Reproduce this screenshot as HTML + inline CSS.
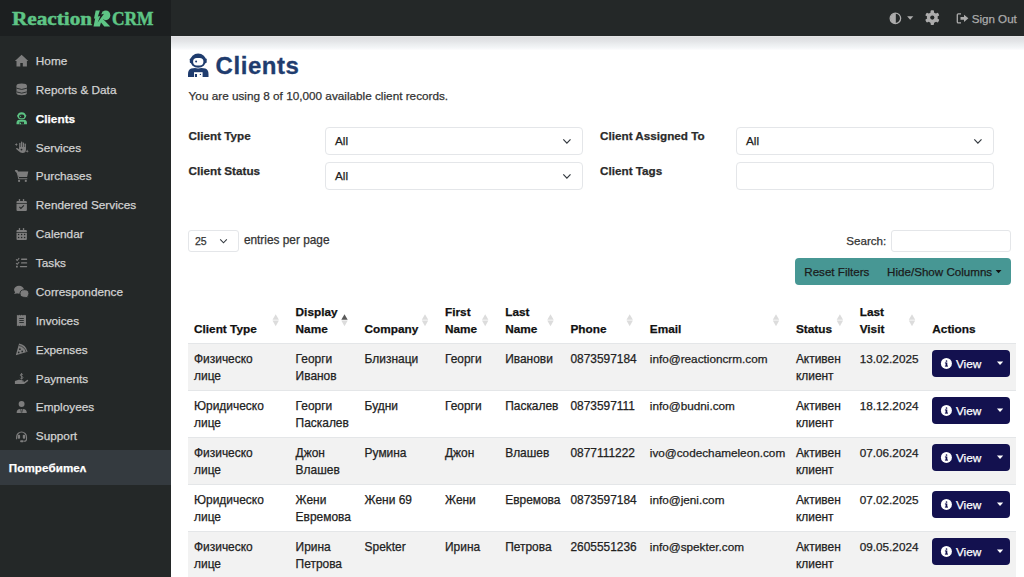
<!DOCTYPE html><html><head><meta charset="utf-8"><style>
*{margin:0;padding:0;box-sizing:border-box}
html,body{width:1024px;height:577px;overflow:hidden;background:#fff;font-family:"Liberation Sans",sans-serif;color:#212529}
.t{position:absolute;white-space:nowrap;-webkit-text-stroke:0.25px currentColor}
.b{position:absolute}
svg{position:absolute;left:0;top:0}
</style></head><body>

<div class="b" style="left:0;top:0;width:171px;height:577px;background:#242828"></div>
<div class="b" style="left:0;top:0;width:171px;height:36px;background:#1c1f20"></div>
<div class="b" style="left:171px;top:0;width:853px;height:36px;background:#242828"></div>
<div class="b" style="left:171px;top:36px;width:853px;height:14px;background:linear-gradient(#e6e7e9 0,#dedfe1 1.5px,#e3e4e7 5px,#eceef0 8.5px,#f4f6f8 12px,#fdfdfe 14px)"></div>
<div class="b" style="left:0;top:450px;width:171px;height:35px;background:#343a3f"></div>
<div class="t" style="left:11.5px;top:7px;font-family:'Liberation Serif',serif;font-weight:bold;font-size:19px;line-height:24px;color:#5ec585;-webkit-text-stroke:0.5px #5ec585;transform:scaleX(1.115);transform-origin:0 0">Reaction</div>
<div class="t" style="left:111.8px;top:7px;font-family:'Liberation Serif',serif;font-weight:bold;font-size:19px;line-height:24px;color:#5ec585;-webkit-text-stroke:0.5px #5ec585;transform:scaleX(0.915);transform-origin:0 0">CRM</div>
<div class="t" style="left:35.80px;top:53.99px;font-size:11.80px;line-height:14.75px;color:#d2d2d2">Home</div>
<div class="t" style="left:35.80px;top:82.86px;font-size:11.80px;line-height:14.75px;color:#d2d2d2">Reports &amp; Data</div>
<div class="t" style="left:35.80px;top:111.74px;font-size:11.80px;line-height:14.75px;color:#fff;font-weight:bold">Clients</div>
<div class="t" style="left:35.80px;top:140.61px;font-size:11.80px;line-height:14.75px;color:#d2d2d2">Services</div>
<div class="t" style="left:35.80px;top:169.49px;font-size:11.80px;line-height:14.75px;color:#d2d2d2">Purchases</div>
<div class="t" style="left:35.80px;top:198.36px;font-size:11.80px;line-height:14.75px;color:#d2d2d2">Rendered Services</div>
<div class="t" style="left:35.80px;top:227.24px;font-size:11.80px;line-height:14.75px;color:#d2d2d2">Calendar</div>
<div class="t" style="left:35.80px;top:256.11px;font-size:11.80px;line-height:14.75px;color:#d2d2d2">Tasks</div>
<div class="t" style="left:35.80px;top:284.99px;font-size:11.80px;line-height:14.75px;color:#d2d2d2">Correspondence</div>
<div class="t" style="left:35.80px;top:313.86px;font-size:11.80px;line-height:14.75px;color:#d2d2d2">Invoices</div>
<div class="t" style="left:35.80px;top:342.74px;font-size:11.80px;line-height:14.75px;color:#d2d2d2">Expenses</div>
<div class="t" style="left:35.80px;top:371.61px;font-size:11.80px;line-height:14.75px;color:#d2d2d2">Payments</div>
<div class="t" style="left:35.80px;top:400.49px;font-size:11.80px;line-height:14.75px;color:#d2d2d2">Employees</div>
<div class="t" style="left:35.80px;top:429.36px;font-size:11.80px;line-height:14.75px;color:#d2d2d2">Support</div>
<div class="t" style="left:8.80px;top:461.23px;font-size:11.60px;line-height:14.50px;color:#fff;font-weight:bold;letter-spacing:0.1px">Поmребиmеʌ</div>
<div class="t" style="left:971.70px;top:11.83px;font-size:11.60px;line-height:14.50px;color:#ababab">Sign Out</div>
<div class="t" style="left:215.60px;top:50.88px;font-size:24.00px;line-height:30.00px;color:#1f3c6e;font-weight:bold;letter-spacing:0.55px;-webkit-text-stroke:0.3px #1f3c6e">Clients</div>
<div class="t" style="left:188.60px;top:88.88px;font-size:11.75px;line-height:14.69px;color:#333">You are using 8 of 10,000 available client records.</div>
<div class="t" style="left:188.60px;top:129.24px;font-size:11.70px;line-height:14.62px;font-weight:bold;color:#2b2b2b">Client Type</div>
<div class="t" style="left:188.60px;top:164.14px;font-size:11.70px;line-height:14.62px;font-weight:bold;color:#2b2b2b">Client Status</div>
<div class="t" style="left:600.10px;top:129.24px;font-size:11.70px;line-height:14.62px;font-weight:bold;color:#2b2b2b">Client Assigned To</div>
<div class="t" style="left:600.10px;top:164.14px;font-size:11.70px;line-height:14.62px;font-weight:bold;color:#2b2b2b">Client Tags</div>
<div class="b" style="left:325px;top:127px;width:257.5px;height:28px;border:1px solid #e4e6e9;border-radius:4px"></div>
<div class="b" style="left:325px;top:162px;width:257.5px;height:28px;border:1px solid #e4e6e9;border-radius:4px"></div>
<div class="b" style="left:736px;top:127px;width:257.5px;height:28px;border:1px solid #e4e6e9;border-radius:4px"></div>
<div class="b" style="left:736px;top:162px;width:257.5px;height:28px;border:1px solid #e4e6e9;border-radius:4px"></div>
<div class="t" style="left:335.00px;top:133.94px;font-size:11.80px;line-height:14.75px;color:#222">All</div>
<div class="t" style="left:335.00px;top:168.94px;font-size:11.80px;line-height:14.75px;color:#222">All</div>
<div class="t" style="left:746.00px;top:133.94px;font-size:11.80px;line-height:14.75px;color:#222">All</div>
<div class="b" style="left:188px;top:230px;width:51px;height:22px;border:1px solid #e4e6e9;border-radius:3px"></div>
<div class="t" style="left:195.00px;top:234.50px;font-size:10.50px;line-height:13.12px;color:#333">25</div>
<div class="t" style="left:243.90px;top:233.29px;font-size:11.85px;line-height:14.81px;color:#333">entries per page</div>
<div class="t" style="left:846.30px;top:233.63px;font-size:11.60px;line-height:14.50px;color:#333">Search:</div>
<div class="b" style="left:891px;top:230px;width:120px;height:22px;border:1px solid #e4e6e9;border-radius:3px"></div>
<div class="b" style="left:795px;top:258px;width:216px;height:27.4px;background:#479794;border-radius:4px"></div>
<div class="t" style="left:804.30px;top:264.73px;font-size:11.60px;line-height:14.50px;color:#1b1b1b">Reset Filters</div>
<div class="t" style="left:887.10px;top:264.73px;font-size:11.60px;line-height:14.50px;color:#1b1b1b">Hide/Show Columns</div>
<div class="t" style="left:194.00px;top:321.74px;font-size:11.80px;line-height:14.75px;font-weight:bold;color:#111">Client Type</div>
<div class="t" style="left:295.60px;top:304.54px;font-size:11.80px;line-height:14.75px;font-weight:bold;color:#111">Display</div>
<div class="t" style="left:295.60px;top:321.74px;font-size:11.80px;line-height:14.75px;font-weight:bold;color:#111">Name</div>
<div class="t" style="left:364.60px;top:321.74px;font-size:11.80px;line-height:14.75px;font-weight:bold;color:#111">Company</div>
<div class="t" style="left:445.00px;top:304.54px;font-size:11.80px;line-height:14.75px;font-weight:bold;color:#111">First</div>
<div class="t" style="left:445.00px;top:321.74px;font-size:11.80px;line-height:14.75px;font-weight:bold;color:#111">Name</div>
<div class="t" style="left:505.20px;top:304.54px;font-size:11.80px;line-height:14.75px;font-weight:bold;color:#111">Last</div>
<div class="t" style="left:505.20px;top:321.74px;font-size:11.80px;line-height:14.75px;font-weight:bold;color:#111">Name</div>
<div class="t" style="left:570.50px;top:321.74px;font-size:11.80px;line-height:14.75px;font-weight:bold;color:#111">Phone</div>
<div class="t" style="left:649.80px;top:321.74px;font-size:11.80px;line-height:14.75px;font-weight:bold;color:#111">Email</div>
<div class="t" style="left:795.90px;top:321.74px;font-size:11.80px;line-height:14.75px;font-weight:bold;color:#111">Status</div>
<div class="t" style="left:859.70px;top:304.54px;font-size:11.80px;line-height:14.75px;font-weight:bold;color:#111">Last</div>
<div class="t" style="left:859.70px;top:321.74px;font-size:11.80px;line-height:14.75px;font-weight:bold;color:#111">Visit</div>
<div class="t" style="left:932.30px;top:321.74px;font-size:11.80px;line-height:14.75px;font-weight:bold;color:#111">Actions</div>
<div class="b" style="left:188px;top:343px;width:828px;height:47px;background:#f2f2f2;border-top:1px solid #e4e6e8"></div>
<div class="t" style="left:194.00px;top:352.19px;font-size:11.95px;line-height:14.94px;color:#222">Физическо</div>
<div class="t" style="left:194.00px;top:369.34px;font-size:11.95px;line-height:14.94px;color:#222">лице</div>
<div class="t" style="left:295.60px;top:352.19px;font-size:11.95px;line-height:14.94px;color:#222">Георги</div>
<div class="t" style="left:295.60px;top:369.34px;font-size:11.95px;line-height:14.94px;color:#222">Иванов</div>
<div class="t" style="left:364.60px;top:352.19px;font-size:11.95px;line-height:14.94px;color:#222">Близнаци</div>
<div class="t" style="left:445.00px;top:352.19px;font-size:11.95px;line-height:14.94px;color:#222">Георги</div>
<div class="t" style="left:505.20px;top:352.19px;font-size:11.95px;line-height:14.94px;color:#222">Иванови</div>
<div class="t" style="left:570.50px;top:352.24px;font-size:11.90px;line-height:14.88px;color:#222">0873597184</div>
<div class="t" style="left:649.80px;top:352.38px;font-size:11.75px;line-height:14.69px;color:#222">info@reactioncrm.com</div>
<div class="t" style="left:795.90px;top:352.19px;font-size:11.95px;line-height:14.94px;color:#222">Активен</div>
<div class="t" style="left:795.90px;top:369.34px;font-size:11.95px;line-height:14.94px;color:#222">клиент</div>
<div class="t" style="left:859.70px;top:352.38px;font-size:11.75px;line-height:14.69px;color:#222">13.02.2025</div>
<div class="b" style="left:931.7px;top:349.8px;width:78.2px;height:27.3px;background:#13114f;border-radius:4px"></div>
<div class="t" style="left:955.90px;top:356.54px;font-size:11.80px;line-height:14.75px;color:#fff">View</div>
<div class="b" style="left:188px;top:390px;width:828px;height:47px;background:#fff;border-top:1px solid #e4e6e8"></div>
<div class="t" style="left:194.00px;top:399.19px;font-size:11.95px;line-height:14.94px;color:#222">Юридическо</div>
<div class="t" style="left:194.00px;top:416.34px;font-size:11.95px;line-height:14.94px;color:#222">лице</div>
<div class="t" style="left:295.60px;top:399.19px;font-size:11.95px;line-height:14.94px;color:#222">Георги</div>
<div class="t" style="left:295.60px;top:416.34px;font-size:11.95px;line-height:14.94px;color:#222">Паскалев</div>
<div class="t" style="left:364.60px;top:399.19px;font-size:11.95px;line-height:14.94px;color:#222">Будни</div>
<div class="t" style="left:445.00px;top:399.19px;font-size:11.95px;line-height:14.94px;color:#222">Георги</div>
<div class="t" style="left:505.20px;top:399.19px;font-size:11.95px;line-height:14.94px;color:#222">Паскалев</div>
<div class="t" style="left:570.50px;top:399.24px;font-size:11.90px;line-height:14.88px;color:#222">0873597111</div>
<div class="t" style="left:649.80px;top:399.38px;font-size:11.75px;line-height:14.69px;color:#222">info@budni.com</div>
<div class="t" style="left:795.90px;top:399.19px;font-size:11.95px;line-height:14.94px;color:#222">Активен</div>
<div class="t" style="left:795.90px;top:416.34px;font-size:11.95px;line-height:14.94px;color:#222">клиент</div>
<div class="t" style="left:859.70px;top:399.38px;font-size:11.75px;line-height:14.69px;color:#222">18.12.2024</div>
<div class="b" style="left:931.7px;top:396.8px;width:78.2px;height:27.3px;background:#13114f;border-radius:4px"></div>
<div class="t" style="left:955.90px;top:403.54px;font-size:11.80px;line-height:14.75px;color:#fff">View</div>
<div class="b" style="left:188px;top:437px;width:828px;height:47px;background:#f2f2f2;border-top:1px solid #e4e6e8"></div>
<div class="t" style="left:194.00px;top:446.19px;font-size:11.95px;line-height:14.94px;color:#222">Физическо</div>
<div class="t" style="left:194.00px;top:463.34px;font-size:11.95px;line-height:14.94px;color:#222">лице</div>
<div class="t" style="left:295.60px;top:446.19px;font-size:11.95px;line-height:14.94px;color:#222">Джон</div>
<div class="t" style="left:295.60px;top:463.34px;font-size:11.95px;line-height:14.94px;color:#222">Влашев</div>
<div class="t" style="left:364.60px;top:446.19px;font-size:11.95px;line-height:14.94px;color:#222">Румина</div>
<div class="t" style="left:445.00px;top:446.19px;font-size:11.95px;line-height:14.94px;color:#222">Джон</div>
<div class="t" style="left:505.20px;top:446.19px;font-size:11.95px;line-height:14.94px;color:#222">Влашев</div>
<div class="t" style="left:570.50px;top:446.24px;font-size:11.90px;line-height:14.88px;color:#222">0877111222</div>
<div class="t" style="left:649.80px;top:446.38px;font-size:11.75px;line-height:14.69px;color:#222">ivo@codechameleon.com</div>
<div class="t" style="left:795.90px;top:446.19px;font-size:11.95px;line-height:14.94px;color:#222">Активен</div>
<div class="t" style="left:795.90px;top:463.34px;font-size:11.95px;line-height:14.94px;color:#222">клиент</div>
<div class="t" style="left:859.70px;top:446.38px;font-size:11.75px;line-height:14.69px;color:#222">07.06.2024</div>
<div class="b" style="left:931.7px;top:443.8px;width:78.2px;height:27.3px;background:#13114f;border-radius:4px"></div>
<div class="t" style="left:955.90px;top:450.54px;font-size:11.80px;line-height:14.75px;color:#fff">View</div>
<div class="b" style="left:188px;top:484px;width:828px;height:47px;background:#fff;border-top:1px solid #e4e6e8"></div>
<div class="t" style="left:194.00px;top:493.19px;font-size:11.95px;line-height:14.94px;color:#222">Юридическо</div>
<div class="t" style="left:194.00px;top:510.34px;font-size:11.95px;line-height:14.94px;color:#222">лице</div>
<div class="t" style="left:295.60px;top:493.19px;font-size:11.95px;line-height:14.94px;color:#222">Жени</div>
<div class="t" style="left:295.60px;top:510.34px;font-size:11.95px;line-height:14.94px;color:#222">Евремова</div>
<div class="t" style="left:364.60px;top:493.19px;font-size:11.95px;line-height:14.94px;color:#222">Жени 69</div>
<div class="t" style="left:445.00px;top:493.19px;font-size:11.95px;line-height:14.94px;color:#222">Жени</div>
<div class="t" style="left:505.20px;top:493.19px;font-size:11.95px;line-height:14.94px;color:#222">Евремова</div>
<div class="t" style="left:570.50px;top:493.24px;font-size:11.90px;line-height:14.88px;color:#222">0873597184</div>
<div class="t" style="left:649.80px;top:493.38px;font-size:11.75px;line-height:14.69px;color:#222">info@jeni.com</div>
<div class="t" style="left:795.90px;top:493.19px;font-size:11.95px;line-height:14.94px;color:#222">Активен</div>
<div class="t" style="left:795.90px;top:510.34px;font-size:11.95px;line-height:14.94px;color:#222">клиент</div>
<div class="t" style="left:859.70px;top:493.38px;font-size:11.75px;line-height:14.69px;color:#222">07.02.2025</div>
<div class="b" style="left:931.7px;top:490.8px;width:78.2px;height:27.3px;background:#13114f;border-radius:4px"></div>
<div class="t" style="left:955.90px;top:497.54px;font-size:11.80px;line-height:14.75px;color:#fff">View</div>
<div class="b" style="left:188px;top:531px;width:828px;height:47px;background:#f2f2f2;border-top:1px solid #e4e6e8"></div>
<div class="t" style="left:194.00px;top:540.19px;font-size:11.95px;line-height:14.94px;color:#222">Физическо</div>
<div class="t" style="left:194.00px;top:557.34px;font-size:11.95px;line-height:14.94px;color:#222">лице</div>
<div class="t" style="left:295.60px;top:540.19px;font-size:11.95px;line-height:14.94px;color:#222">Ирина</div>
<div class="t" style="left:295.60px;top:557.34px;font-size:11.95px;line-height:14.94px;color:#222">Петрова</div>
<div class="t" style="left:364.60px;top:540.19px;font-size:11.95px;line-height:14.94px;color:#222">Spekter</div>
<div class="t" style="left:445.00px;top:540.19px;font-size:11.95px;line-height:14.94px;color:#222">Ирина</div>
<div class="t" style="left:505.20px;top:540.19px;font-size:11.95px;line-height:14.94px;color:#222">Петрова</div>
<div class="t" style="left:570.50px;top:540.24px;font-size:11.90px;line-height:14.88px;color:#222">2605551236</div>
<div class="t" style="left:649.80px;top:540.38px;font-size:11.75px;line-height:14.69px;color:#222">info@spekter.com</div>
<div class="t" style="left:795.90px;top:540.19px;font-size:11.95px;line-height:14.94px;color:#222">Активен</div>
<div class="t" style="left:795.90px;top:557.34px;font-size:11.95px;line-height:14.94px;color:#222">клиент</div>
<div class="t" style="left:859.70px;top:540.38px;font-size:11.75px;line-height:14.69px;color:#222">09.05.2024</div>
<div class="b" style="left:931.7px;top:537.8px;width:78.2px;height:27.3px;background:#13114f;border-radius:4px"></div>
<div class="t" style="left:955.90px;top:544.54px;font-size:11.80px;line-height:14.75px;color:#fff">View</div>
<svg width="1024" height="577" viewBox="0 0 1024 577"><g fill="#5ec585"><path d="M95.7,10.4 L103,10.4 L103,19 L110.3,26.6 L104.3,26.6 L101,22.5 L99.8,26.6 L93.5,26.6 L95.2,18.6 L94,18.4 Z"/><ellipse cx="105.8" cy="15.3" rx="4.5" ry="4.9"/></g><path d="M100.1,9.8 L103.5,9.8 L101.2,14.4 L104,13.7 L97.7,22.6 L100.3,15.9 L97.9,16.5 Z" fill="#1c1f20"/><path d="M14.9,60.9 L21.6,54.8 L28.3,60.9 L26.9,60.9 L26.9,66.6 L22.8,66.6 L22.8,63.1 L20.3,63.1 L20.3,66.6 L16.5,66.6 L16.5,60.9 Z" fill="#7d7d7d"/><g fill="#7d7d7d"><ellipse cx="21.7" cy="85.8" rx="5.2" ry="2.2"/><rect x="16.5" y="85.8" width="10.4" height="7.4"/><ellipse cx="21.7" cy="93.1" rx="5.2" ry="2.2"/></g><g stroke="#242828" stroke-width="0.9" fill="none"><path d="M16.5,88.2 Q21.7,90.7 26.9,88.2"/><path d="M16.5,91.9 Q21.7,94.4 26.9,91.9"/></g><g transform="translate(16.50 112.30) scale(0.510)"><path d="M0,23.4 L0,20.5 Q0,16.2 3.2,15 Q5.2,14.4 7,14.4 L13.5,14.4 Q15.3,14.4 17.3,15 Q20.5,16.2 20.5,20.5 L20.5,23.4 Z" fill="#5cc283"/><ellipse cx="10.15" cy="7.05" rx="8.6" ry="7.8" fill="#242828"/><ellipse cx="10.15" cy="7.05" rx="7.95" ry="7.05" fill="#5cc283"/><rect x="1.8" y="4.9" width="2" height="4.6" rx="0.8" fill="#5cc283"/><rect x="16.7" y="4.9" width="2" height="4.6" rx="0.8" fill="#5cc283"/><rect x="5.1" y="4.4" width="10.3" height="7.4" rx="3.7" fill="#242828"/><circle cx="8.1" cy="8" r="1" fill="#5cc283"/><rect x="6" y="18.6" width="8.6" height="4.8" fill="#242828"/><rect x="6.9" y="20.4" width="2.1" height="3" fill="#5cc283"/><circle cx="12.4" cy="20.8" r="0.7" fill="#5cc283"/></g><g fill="#7d7d7d"><path d="M16.3,143 L16.8,144.1 L17.9,144.6 L16.8,145.1 L16.3,146.2 L15.8,145.1 L14.7,144.6 L15.8,144.1 Z"/><path d="M27.2,149.6 L27.7,150.7 L28.8,151.2 L27.7,151.7 L27.2,152.8 L26.7,151.7 L25.6,151.2 L26.7,150.7 Z"/><rect x="19.2" y="142.8" width="1.3" height="7" rx="0.6"/><rect x="21" y="141.6" width="1.3" height="7" rx="0.6"/><rect x="22.8" y="142.4" width="1.3" height="7" rx="0.6"/><rect x="24.6" y="143.6" width="1.3" height="6" rx="0.6"/><path d="M19.2,147 L25.9,147 L25.9,150 Q25.9,152.9 22.5,152.9 Q20.5,152.9 18.5,151 L16.2,148.9 Q15.8,148.2 16.6,148.1 Q17.4,148 19.2,149.5 Z"/></g><circle cx="21.5" cy="149.6" r="0.9" fill="#242828"/><g fill="#7d7d7d"><path d="M15.2,170.4 L17.3,170.4 Q17.9,170.5 18,171.2 L18.1,171.6 L28.3,171.6 L27.1,177 L18.9,177 Z"/><rect x="14.9" y="170.1" width="2.6" height="1.5" rx="0.7"/><path d="M17.4,171 L19.1,178.2 L27.3,178.2 L27.3,179.3 L18.3,179.3 L16.6,171.2 Z"/><circle cx="19.1" cy="180.9" r="1.1"/><circle cx="25.8" cy="180.9" r="1.1"/></g><g fill="#7d7d7d"><rect x="18.8" y="199.1" width="1.3" height="2.6" rx="0.5"/><rect x="22.9" y="199.1" width="1.3" height="2.6" rx="0.5"/><path d="M16.5,202.1 Q16.5,200.9 17.6,200.9 L25.8,200.9 Q26.9,200.9 26.9,202.1 L26.9,203.0 L16.5,203.0 Z"/><path d="M16.5,203.8 L26.9,203.8 L26.9,209.9 Q26.9,210.9 25.9,210.9 L17.5,210.9 Q16.5,210.9 16.5,209.9 Z"/></g><polyline points="19.4,206.9 20.9,208.4 23.9,205.4" fill="none" stroke="#242828" stroke-width="1.1"/><g fill="#7d7d7d"><rect x="18.8" y="228.1" width="1.3" height="2.6" rx="0.5"/><rect x="22.9" y="228.1" width="1.3" height="2.6" rx="0.5"/><path d="M16.5,231.1 Q16.5,229.9 17.6,229.9 L25.8,229.9 Q26.9,229.9 26.9,231.1 L26.9,232.0 L16.5,232.0 Z"/><path d="M16.5,232.8 L26.9,232.8 L26.9,238.9 Q26.9,239.9 25.9,239.9 L17.5,239.9 Q16.5,239.9 16.5,238.9 Z"/></g><g fill="#242828"><circle cx="18.6" cy="234.4" r="0.75"/><circle cx="18.6" cy="237.4" r="0.75"/><circle cx="21.6" cy="234.4" r="0.75"/><circle cx="21.6" cy="237.4" r="0.75"/><circle cx="24.6" cy="234.4" r="0.75"/><circle cx="24.6" cy="237.4" r="0.75"/></g><g stroke="#7d7d7d" stroke-width="1.1" fill="none"><polyline points="16.1,259.4 17.2,260.5 19.2,258.2"/><polyline points="16.1,263.2 17.2,264.3 19.2,262"/></g><g fill="#7d7d7d"><rect x="16" y="265.8" width="1.8" height="1.8" rx="0.3"/><rect x="21" y="258.6" width="6.2" height="1.3" rx="0.6"/><rect x="21" y="262.2" width="6.2" height="1.3" rx="0.6"/><rect x="19.8" y="265.9" width="7.4" height="1.3" rx="0.6"/></g><g fill="#7d7d7d"><ellipse cx="19" cy="289.7" rx="4.95" ry="3.95"/><path d="M15.5,291.5 L14.1,294 L17.6,293.2 Z"/></g><g fill="#7d7d7d" stroke="#242828" stroke-width="0.9"><path d="M20,293.6 Q20,289.7 24.45,289.7 Q28.9,289.7 28.9,293.6 Q28.9,295.8 27.6,296 L28.8,297.8 L25.2,297.4 Q20,297.5 20,293.6 Z"/></g><path d="M16.9,314.8 L18.1,315.5 L19.3,314.8 L20.5,315.5 L21.7,314.8 L22.9,315.5 L24.1,314.8 L25.1,315.5 L26,314.8 L26,326.3 L25.1,325.6 L24.1,326.3 L22.9,325.6 L21.7,326.3 L20.5,325.6 L19.3,326.3 L18.1,325.6 L16.9,326.3 Z" fill="#7d7d7d"/><g stroke="#242828" stroke-width="0.9"><line x1="19.3" y1="318.5" x2="23.8" y2="318.5"/><line x1="19.3" y1="320.5" x2="23.8" y2="320.5"/><line x1="19.3" y1="322.5" x2="23.8" y2="322.5"/></g><path d="M15.8,355.3 L19.1,343.6 Q25.8,344.6 27.6,351.8 Z" fill="#7d7d7d"/><path d="M18.8,345.5 Q24.6,346.4 26.2,352.2" fill="none" stroke="#242828" stroke-width="0.7"/><g fill="#242828"><circle cx="19.9" cy="349.2" r="0.85"/><circle cx="22.2" cy="351.4" r="0.85"/><circle cx="18.7" cy="352.4" r="0.85"/></g><g fill="none" stroke="#7d7d7d" stroke-width="0.85"><path d="M22.9,374.9 Q22.5,374.1 21.6,374.1 Q20.3,374.1 20.3,375.2 Q20.3,376 21.6,376.3 Q22.95,376.6 22.95,377.5 Q22.95,378.6 21.6,378.6 Q20.5,378.6 20.1,377.8"/><path d="M21.6,373 L21.6,379.6"/></g><path d="M14.9,380.9 L18.6,379.8 Q19.8,379.5 21.3,380 L23.6,380.7 Q24.4,381.1 23.8,381.6 L21.4,381.5 L24.2,381.9 L27,379.9 Q28.1,379.5 28.2,380.4 Q28.2,380.9 27.5,381.4 L24.8,383.6 Q24.1,384.1 23,384.1 L14.9,384.1 Z" fill="#7d7d7d"/><g fill="#7d7d7d"><circle cx="21.6" cy="404" r="2.95"/><path d="M16.6,412.9 Q16.6,408.9 20.3,408.9 L22.9,408.9 Q26.8,408.9 26.8,412.9 Z"/></g><g stroke="#242828" stroke-width="0.6" fill="none"><path d="M20.5,408.5 L21.3,412.6"/><path d="M22.7,408.5 L21.9,412.6"/></g><path d="M16.6,439.2 L16.6,437 A4.95,4.95 0 0 1 26.5,437 L26.5,439.3 Q26.5,441.3 24,441.3" fill="none" stroke="#7d7d7d" stroke-width="1.1"/><g fill="#7d7d7d"><rect x="17.7" y="434.7" width="2.4" height="4.1" rx="1"/><rect x="22.8" y="434.7" width="2.4" height="4.1" rx="1"/><rect x="20.1" y="440.3" width="3.6" height="1.9" rx="0.9"/></g><circle cx="895.4" cy="18.3" r="5.25" fill="none" stroke="#acacac" stroke-width="1.3"/><path d="M895.8,13 A5.3,5.3 0 0 0 895.8,23.6 Z" fill="#acacac"/><polygon points="907.1,16.3 913.3,16.3 910.2,19.7" fill="#acacac"/><g fill="#acacac" transform="translate(932.3 17.6)"><rect x="-1.7" y="-7.3" width="3.4" height="14.6" rx="0.9" transform="rotate(0)"/><rect x="-1.7" y="-7.3" width="3.4" height="14.6" rx="0.9" transform="rotate(60)"/><rect x="-1.7" y="-7.3" width="3.4" height="14.6" rx="0.9" transform="rotate(120)"/><circle r="5.4"/></g><circle cx="932.3" cy="17.6" r="2.1" fill="#242828"/><path d="M961,13.8 L958.3,13.8 Q957.3,13.8 957.3,14.8 L957.3,21.9 Q957.3,22.9 958.3,22.9 L961,22.9" fill="none" stroke="#acacac" stroke-width="1.3"/><path d="M960.5,16.9 L964,16.9 L964,14.7 L968.4,18.3 L964,21.9 L964,19.7 L960.5,19.7 Z" fill="#acacac"/><g transform="translate(188.00 53.60) scale(1.000)"><path d="M0,23.4 L0,20.5 Q0,16.2 3.2,15 Q5.2,14.4 7,14.4 L13.5,14.4 Q15.3,14.4 17.3,15 Q20.5,16.2 20.5,20.5 L20.5,23.4 Z" fill="#1f3c6e"/><ellipse cx="10.15" cy="7.05" rx="8.6" ry="7.8" fill="#fff"/><ellipse cx="10.15" cy="7.05" rx="7.95" ry="7.05" fill="#1f3c6e"/><rect x="1.8" y="4.9" width="2" height="4.6" rx="0.8" fill="#1f3c6e"/><rect x="16.7" y="4.9" width="2" height="4.6" rx="0.8" fill="#1f3c6e"/><rect x="5.1" y="4.4" width="10.3" height="7.4" rx="3.7" fill="#fff"/><circle cx="8.1" cy="8" r="1" fill="#1f3c6e"/><rect x="6" y="18.6" width="8.6" height="4.8" fill="#fff"/><rect x="6.9" y="20.4" width="2.1" height="3" fill="#1f3c6e"/><circle cx="12.4" cy="20.8" r="0.7" fill="#1f3c6e"/></g><polyline points="563.3,139.4 566.9,143.1 570.5,139.4" fill="none" stroke="#343a40" stroke-width="1.2"/><polyline points="563.3,174.4 566.9,178.1 570.5,174.4" fill="none" stroke="#343a40" stroke-width="1.2"/><polyline points="974.3,139.4 977.9,143.1 981.5,139.4" fill="none" stroke="#343a40" stroke-width="1.2"/><polyline points="220.2,239.3 223.5,242.8 226.8,239.3" fill="none" stroke="#343a40" stroke-width="1.1"/><polygon points="995.6,270 1001.5,270 998.55,273.3" fill="#111"/><polygon points="275.7,314.2 272.5,319.8 278.9,319.8" fill="#dcdcdc"/><polygon points="272.5,320.6 278.9,320.6 275.7,326.3" fill="#dcdcdc"/><polygon points="344.5,314.2 341.3,319.8 347.7,319.8" fill="#5a5a5a"/><polygon points="341.3,320.6 347.7,320.6 344.5,326.3" fill="#dcdcdc"/><polygon points="425.0,314.2 421.8,319.8 428.2,319.8" fill="#dcdcdc"/><polygon points="421.8,320.6 428.2,320.6 425.0,326.3" fill="#dcdcdc"/><polygon points="485.2,314.2 482.0,319.8 488.4,319.8" fill="#dcdcdc"/><polygon points="482.0,320.6 488.4,320.6 485.2,326.3" fill="#dcdcdc"/><polygon points="550.5,314.2 547.3,319.8 553.7,319.8" fill="#dcdcdc"/><polygon points="547.3,320.6 553.7,320.6 550.5,326.3" fill="#dcdcdc"/><polygon points="629.7,314.2 626.5,319.8 632.9,319.8" fill="#dcdcdc"/><polygon points="626.5,320.6 632.9,320.6 629.7,326.3" fill="#dcdcdc"/><polygon points="776.0,314.2 772.8,319.8 779.2,319.8" fill="#dcdcdc"/><polygon points="772.8,320.6 779.2,320.6 776.0,326.3" fill="#dcdcdc"/><polygon points="839.9,314.2 836.7,319.8 843.1,319.8" fill="#dcdcdc"/><polygon points="836.7,320.6 843.1,320.6 839.9,326.3" fill="#dcdcdc"/><polygon points="912.0,314.2 908.8,319.8 915.2,319.8" fill="#dcdcdc"/><polygon points="908.8,320.6 915.2,320.6 912.0,326.3" fill="#dcdcdc"/><circle cx="946.4" cy="363.4" r="5.5" fill="#fff"/><g fill="#13114f"><circle cx="946.5" cy="361.0" r="0.85"/><rect x="945.6" y="362.5" width="1.7" height="3.6"/><rect x="944.9" y="365.6" width="3.1" height="1"/><rect x="944.9" y="362.5" width="1.2" height="0.9"/></g><polygon points="996.9,361.6 1003.2,361.6 1000.05,364.9" fill="#fff"/><circle cx="946.4" cy="410.4" r="5.5" fill="#fff"/><g fill="#13114f"><circle cx="946.5" cy="408.0" r="0.85"/><rect x="945.6" y="409.5" width="1.7" height="3.6"/><rect x="944.9" y="412.6" width="3.1" height="1"/><rect x="944.9" y="409.5" width="1.2" height="0.9"/></g><polygon points="996.9,408.6 1003.2,408.6 1000.05,411.9" fill="#fff"/><circle cx="946.4" cy="457.4" r="5.5" fill="#fff"/><g fill="#13114f"><circle cx="946.5" cy="455.0" r="0.85"/><rect x="945.6" y="456.5" width="1.7" height="3.6"/><rect x="944.9" y="459.6" width="3.1" height="1"/><rect x="944.9" y="456.5" width="1.2" height="0.9"/></g><polygon points="996.9,455.6 1003.2,455.6 1000.05,458.9" fill="#fff"/><circle cx="946.4" cy="504.4" r="5.5" fill="#fff"/><g fill="#13114f"><circle cx="946.5" cy="502.0" r="0.85"/><rect x="945.6" y="503.5" width="1.7" height="3.6"/><rect x="944.9" y="506.6" width="3.1" height="1"/><rect x="944.9" y="503.5" width="1.2" height="0.9"/></g><polygon points="996.9,502.6 1003.2,502.6 1000.05,505.9" fill="#fff"/><circle cx="946.4" cy="551.4" r="5.5" fill="#fff"/><g fill="#13114f"><circle cx="946.5" cy="549.0" r="0.85"/><rect x="945.6" y="550.5" width="1.7" height="3.6"/><rect x="944.9" y="553.6" width="3.1" height="1"/><rect x="944.9" y="550.5" width="1.2" height="0.9"/></g><polygon points="996.9,549.6 1003.2,549.6 1000.05,552.9" fill="#fff"/></svg>
</body></html>
